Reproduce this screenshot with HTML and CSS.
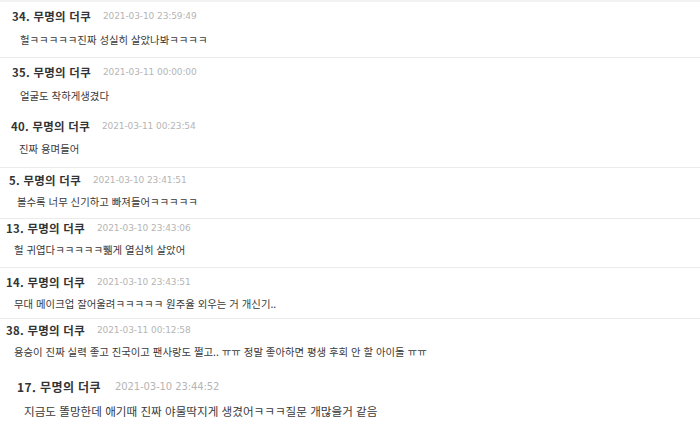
FILE: index.html
```html
<!DOCTYPE html>
<html lang="ko">
<head>
<meta charset="utf-8">
<link rel="stylesheet" href="styles.css">
</head>
<body>
<div class="list">
  <div class="cmt c1 line">
    <div class="hd"><span class="nm">34. 무명의 더쿠</span><span class="dt">2021-03-10 23:59:49</span></div>
    <div class="bd">헐ㅋㅋㅋㅋㅋ진짜 성실히 살았나봐ㅋㅋㅋㅋ</div>
  </div>
  <div class="cmt c2">
    <div class="hd"><span class="nm">35. 무명의 더쿠</span><span class="dt">2021-03-11 00:00:00</span></div>
    <div class="bd">얼굴도 착하게생겼다</div>
  </div>
  <div class="cmt c3 line">
    <div class="hd"><span class="nm">40. 무명의 더쿠</span><span class="dt">2021-03-11 00:23:54</span></div>
    <div class="bd">진짜 용며들어</div>
  </div>
  <div class="cmt c4 line">
    <div class="hd"><span class="nm">5. 무명의 더쿠</span><span class="dt">2021-03-10 23:41:51</span></div>
    <div class="bd">볼수록 너무 신기하고 빠져들어ㅋㅋㅋㅋㅋ</div>
  </div>
  <div class="cmt c5 line">
    <div class="hd"><span class="nm">13. 무명의 더쿠</span><span class="dt">2021-03-10 23:43:06</span></div>
    <div class="bd">헐 귀엽다ㅋㅋㅋㅋㅋ쀎게 열심히 살았어</div>
  </div>
  <div class="cmt c6 line">
    <div class="hd"><span class="nm">14. 무명의 더쿠</span><span class="dt">2021-03-10 23:43:51</span></div>
    <div class="bd">무대 메이크업 잘어울려ㅋㅋㅋㅋㅋ 원주율 외우는 거 개신기..</div>
  </div>
  <div class="cmt c7">
    <div class="hd"><span class="nm">38. 무명의 더쿠</span><span class="dt">2021-03-11 00:12:58</span></div>
    <div class="bd">용승이 진짜 실력 좋고 진국이고 팬사랑도 쩔고.. ㅠㅠ 정말 좋아하면 평생 후회 안 할 아이돌 ㅠㅠ</div>
  </div>
  <div class="cmt c8">
    <div class="hd"><span class="nm">17. 무명의 더쿠</span><span class="dt">2021-03-10 23:44:52</span></div>
    <div class="bd">지금도 똘망한데 애기때 진짜 야물딱지게 생겼어ㅋㅋㅋ질문 개많을거 같음</div>
  </div>
</div>
</body>
</html>
```

FILE: styles.css
```css
* { box-sizing: border-box; }
html, body { margin: 0; padding: 0; background: #fff; }
body {
  width: 700px;
  height: 427px;
  overflow: hidden;
  font-family: "Noto Sans CJK KR", "Noto Sans", sans-serif;
  color: #333;
}
.list {
  display: flex;
  flex-direction: column;
  border-top: 2px solid #f3f3f3;
}
.cmt {
  --x: 12px;
  --pt: 6px;
  --gap: 8px;
  --pb: 9px;
  padding: var(--pt) 0 var(--pb) var(--x);
  display: flex;
  flex-direction: column;
  gap: var(--gap);
}
.cmt.line { border-bottom: 1px solid #ebebeb; }
.hd {
  display: flex;
  align-items: center;
  height: 16px;
  gap: 12px;
  white-space: nowrap;
}
.nm {
  font-size: 11.4px;
  font-weight: 700;
  color: #333;
  letter-spacing: 0.3px;
}
.dt {
  font-family: "DejaVu Sans", "Liberation Sans", sans-serif;
  font-size: 9px;
  color: #b5b5b5;
  letter-spacing: -0.1px;
}
.bd {
  height: 16px;
  line-height: 16px;
  padding-left: 8px;
  font-size: 10.4px;
  color: #3a3a3a;
  white-space: nowrap;
}
.c1 { --x: 12px; --pt: 6px; --gap: 8px; --pb: 9px; }
.c2 { --x: 12px; --pt: 6px; --gap: 8px; --pb: 6px; }
.c3 { --x: 11px; --pt: 8px; --gap: 7px; --pb: 10px; }
.c4 { --x: 9px; --pt: 4px; --gap: 6px; --pb: 8px; }
.c5 { --x: 6px; --pt: 1px; --gap: 6px; --pb: 9px; }
.c6 { --x: 6px; --pt: 6px; --gap: 6px; --pb: 6px; }
.c7 { --x: 6px; --pt: 3px; --gap: 6px; --pb: 8px; }
.c8 { --x: 17px; --pt: 10px; --gap: 9px; --pb: 0px; }
.c8 .nm { font-size: 12px; letter-spacing: 0.4px; }
.c8 .dt { font-size: 10px; }
.c8 .bd { font-size: 11.6px; padding-left: 7px; }
.c8 .hd { gap: 14px; }
```
